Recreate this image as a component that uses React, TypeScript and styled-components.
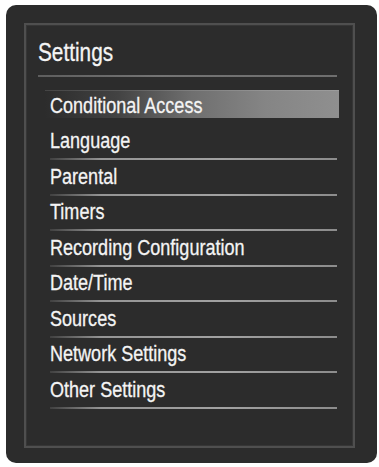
import styled, { createGlobalStyle } from 'styled-components';

const items = [
  'Conditional Access',
  'Language',
  'Parental',
  'Timers',
  'Recording Configuration',
  'Date/Time',
  'Sources',
  'Network Settings',
  'Other Settings',
];

function App() {
  return (
    <>
      <GlobalStyle />
      <Panel>
        <Frame>
          <Header>
            <Label $size={26} $scale={0.8}>
              Settings
            </Label>
          </Header>
          <List>
            {items.map((item, i) => (
              <Row key={item} $active={i === 0}>
                <Label $size={22} $scale={0.82}>
                  {item}
                </Label>
              </Row>
            ))}
          </List>
        </Frame>
      </Panel>
    </>
  );
}

export default App;

const GlobalStyle = createGlobalStyle`
  body {
    margin: 0;
    background: #ffffff;
    font-family: "Liberation Sans", Arial, sans-serif;
  }
`;

const Panel = styled.div`
  box-sizing: border-box;
  width: 371px;
  height: 458px;
  margin: 5px 0 0 6px;
  padding: 18px;
  border-radius: 10px;
  background: #2c2c2c;
`;

const Frame = styled.div`
  box-sizing: border-box;
  width: 331px;
  height: 425px;
  border: 2px solid #4f4f4f;
  box-shadow: inset 0 0 0 1px #363636;
  padding: 14px 16px 0 12px;
  display: flex;
  flex-direction: column;
`;

const Header = styled.div`
  height: 26px;
  padding-bottom: 10px;
  border-bottom: 2px solid;
  border-image: linear-gradient(90deg, #5e5e5e, #747474 40%, #6e6e6e) 1;
`;

const List = styled.div`
  margin: 12px 0 0 12px;
  display: flex;
  flex-direction: column;
`;

const Row = styled.div<{ $active: boolean }>`
  position: relative;
  box-sizing: border-box;
  height: 35.5px;
  padding-bottom: 6px;
  display: flex;
  align-items: flex-end;
  border-bottom: 2px solid;
  border-image: ${({ $active }) =>
      $active
        ? 'linear-gradient(90deg, transparent, transparent) 1'
        : 'linear-gradient(90deg, rgba(120,120,120,0.25), #959595 18%, #a2a2a2 60%, #8c8c8c)  1'};

  &::before {
    content: '';
    display: ${({ $active }) => ($active ? 'block' : 'none')};
    position: absolute;
    left: -5px;
    right: -2px;
    top: 1px;
    height: 28px;
    background: linear-gradient(
      90deg,
      rgba(120, 120, 120, 0) 0%,
      rgba(110, 110, 110, 0.35) 25%,
      #6f6f6f 50%,
      #858585 75%,
      #8f8f8f 100%
    );
    box-shadow: inset 0 1px 0 rgba(255, 255, 255, 0.12);
  }
`;

const Label = styled.span<{ $size: number; $scale: number }>`
  position: relative;
  display: inline-block;
  font-size: ${({ $size }) => $size}px;
  line-height: 1;
  color: #f4f4f4;
  white-space: nowrap;
  -webkit-text-stroke: 0.3px #f4f4f4;
  transform: scaleX(${({ $scale }) => $scale});
  transform-origin: left center;
`;
